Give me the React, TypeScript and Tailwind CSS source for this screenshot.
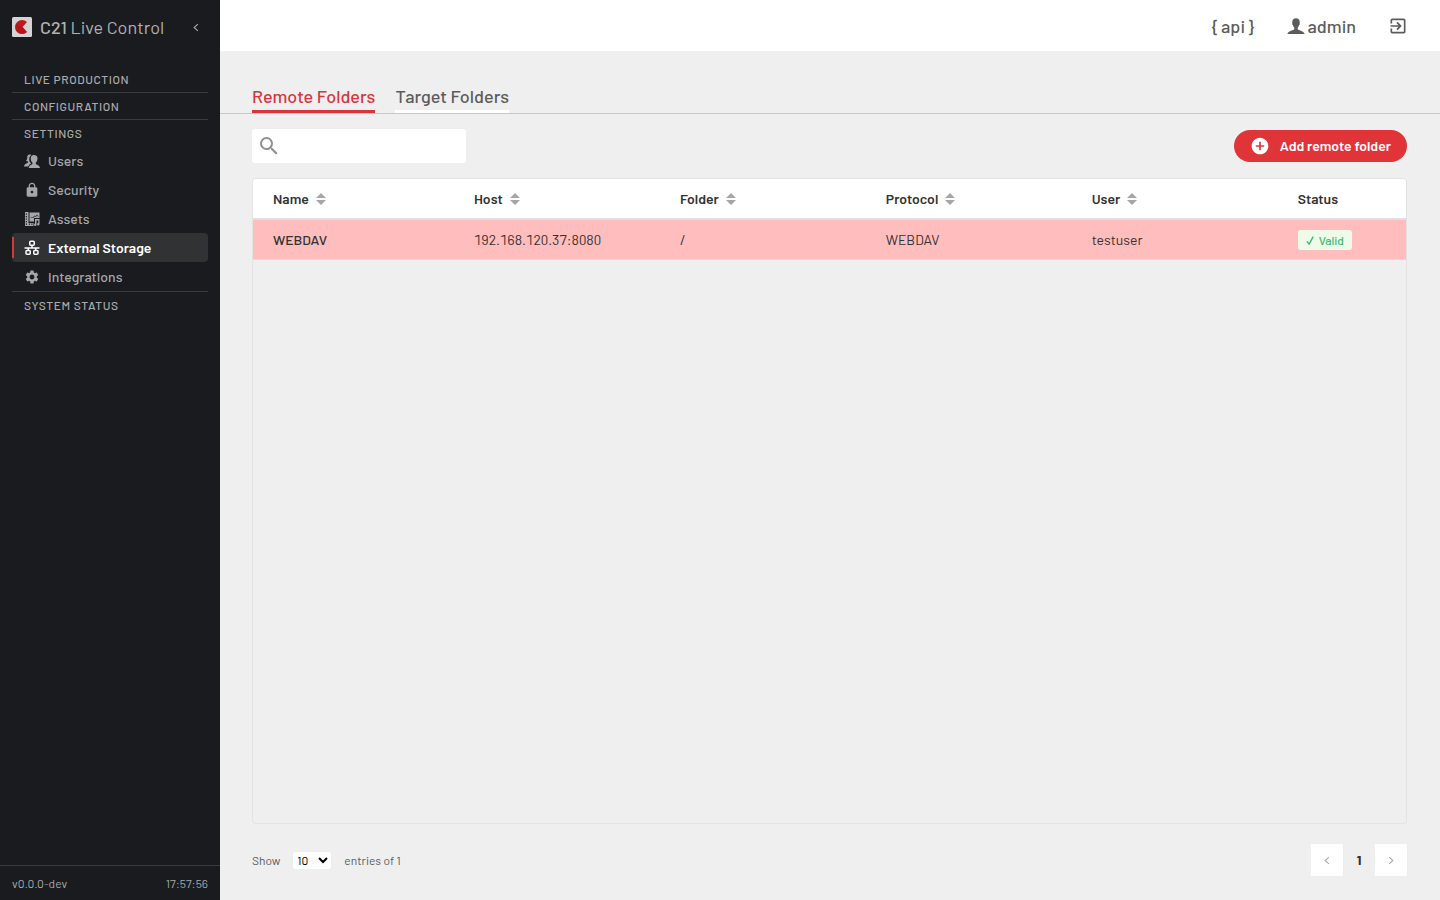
import React, { useState } from "react";
import { MdAddCircle, MdExitToApp, MdLock, MdSearch, MdSettings } from "react-icons/md";

const PERSON =
  "M12 1.5c-3 0-5 2.1-5 5.2 0 .5.1 1 .2 1.5-.6.3-.3 2.300.6 2.600.3 1.400 1 2.500 1.900 3.200v2.300C9.200 17.600 2 18 .500 22.500h23C22 18 14.800 17.600 14.300 16.300V14c.9-.7 1.600-1.800 1.900-3.200.9-.3 1.200-2.300.6-2.600.1-.5.2-1 .2-1.500 0-3.100-2-5.200-5-5.200z";

function PersonIcon({ className }: { className?: string }) {
  return (
    <svg viewBox="0 0 24 24" fill="currentColor" className={className} aria-hidden="true">
      <path d={PERSON} />
    </svg>
  );
}

function UsersIcon() {
  return (
    <svg viewBox="0 0 32 32" fill="currentColor" className="size-4" aria-hidden="true">
      <path d="M11.500 3C8 3 6.300 5.500 6.500 9c.1 2.800-.6 5-2.500 6.500 1.300 1 2.600 1.200 4 1.200v2C7.500 21 1 21 0 27h8.500c1-3.500 4-4.700 6-5.500-3-3-4.500-6-4-10.500.3-3.500 2-5.500 4.500-7C14 3.300 12.900 3 11.500 3z" />
      <path d="M20 4c-4.300 0-6.700 2.800-6.500 7 0 4 1.500 6.800 3.500 8.500v2C16.500 23.500 10.500 23.500 9.500 30H32c-1-6.500-8-6.500-8.500-8.500v-2c2-1.700 3.300-4.500 3.500-8.500.2-4.200-2.700-7-7-7z" />
    </svg>
  );
}

function AssetsIcon() {
  return (
    <svg viewBox="0 0 32 32" className="size-4" aria-hidden="true">
      <path
        fill="currentColor"
        fillRule="evenodd"
        d="M2 2h7v22h10v6H2V2zm1.500 3v2.500H6V5H3.500zm0 5v2.500H6V10H3.500zm0 5v2.500H6V15H3.500zm0 5v2.500H6V20H3.500zm0 5v2.500H6V25H3.500zm6 0v2.500H12V25H9.500zm5 0v2.500H17V25h-2.500z"
      />
      <path
        fill="currentColor"
        fillRule="evenodd"
        d="M11 3h20v11H20v7h-9V3zm2 11h5.500l3-3.500 2 1.500 2.500-3 3 3V11l-3-4-3 3.500-2-1.500-3.500 4H13v1zM22 16h9v10.500a2.500 2.500 0 1 1-2.500-2.500V19H25v8.500a2.500 2.500 0 1 1-3-2.400V16z"
      />
    </svg>
  );
}

function StorageIcon() {
  return (
    <svg viewBox="0 0 16 16" fill="none" stroke="currentColor" strokeWidth="1.500" className="size-4" aria-hidden="true">
      <rect x="5.750" y="1.250" width="4.500" height="4" rx="1" />
      <rect x="2" y="10.500" width="4.250" height="3.750" rx="1" />
      <rect x="9.750" y="10.500" width="4.250" height="3.750" rx="1" />
      <path d="M8 5.500V8M.5 8h15M4.250 8v2.500M11.750 8v2.500" />
    </svg>
  );
}

function LogoIcon() {
  return (
    <svg viewBox="0 0 20 20" className="size-5" aria-hidden="true">
      <rect width="20" height="20" rx="1.500" fill="#d4d4d6" />
      <path d="M10.500 10 15 5A7 7 0 1 0 15 15z" fill="#c4161f" />
      <path d="M10.500 10 4 6.500A7 7 0 0 0 15 15z" fill="#a80f18" opacity=".5" />
    </svg>
  );
}

function Chevron({ right, className }: { right?: boolean; className?: string }) {
  return (
    <svg viewBox="0 0 8 12" fill="none" stroke="currentColor" strokeWidth="1.500" className={className} aria-hidden="true">
      <path d={right ? "M1.500 1.500 6.500 6l-5 4.500" : "M6.500 1.500 1.500 6l5 4.500"} />
    </svg>
  );
}

const settings = [
  { label: "Users", icon: <UsersIcon /> },
  { label: "Security", icon: <MdLock className="size-4" /> },
  { label: "Assets", icon: <AssetsIcon /> },
  { label: "External Storage", icon: <StorageIcon />, active: true },
  { label: "Integrations", icon: <MdSettings className="size-4" /> },
];

const columns = [
  { label: "Name", width: "w-[17.43%]", sortable: true },
  { label: "Host", width: "w-[17.86%]", sortable: true },
  { label: "Folder", width: "w-[17.86%]", sortable: true },
  { label: "Protocol", width: "w-[17.86%]", sortable: true },
  { label: "User", width: "w-[17.86%]", sortable: true },
  { label: "Status", width: "w-[11.13%]", sortable: false },
];

function SectionButton({ children }: { children: React.ReactNode }) {
  return (
    <button type="button" className="flex h-[26px] w-full items-center px-3 text-left text-xs font-medium tracking-wider text-[#a9aaac]">
      {children}
    </button>
  );
}

function Sidebar() {
  return (
    <aside className="flex w-[220px] shrink-0 flex-col bg-[#1a1b1e] text-[#a6a7a9]">
      <div className="flex h-[54px] items-center px-3">
        <LogoIcon />
        <span className="ml-2 text-lg leading-[26px] text-[#b0b1b3]">
          <span className="font-medium">C21</span> Live Control
        </span>
        <button type="button" aria-label="Collapse menu" className="ml-auto flex size-6 items-center justify-center">
          <Chevron className="h-[9px] w-[6px]" />
        </button>
      </div>
      <nav className="mt-3 flex-1 px-3">
        <div className="border-b border-[#3a3b3e]">
          <SectionButton>LIVE PRODUCTION</SectionButton>
        </div>
        <div className="border-b border-[#3a3b3e]">
          <SectionButton>CONFIGURATION</SectionButton>
        </div>
        <div className="border-b border-[#3a3b3e]">
          <SectionButton>SETTINGS</SectionButton>
          <ul>
            {settings.map((item) => (
              <li key={item.label}>
                <a
                  href="#"
                  aria-current={item.active ? "page" : undefined}
                  className={
                    item.active
                      ? "relative flex h-[29px] items-center gap-2 rounded bg-[#313234] px-3 text-sm font-semibold text-white"
                      : "flex h-[29px] items-center gap-2 px-3 text-sm font-medium"
                  }
                >
                  {item.active && <span className="absolute inset-y-1 left-0 w-[2px] bg-[#d8363c]" />}
                  {item.icon}
                  {item.label}
                </a>
              </li>
            ))}
          </ul>
        </div>
        <SectionButton>SYSTEM STATUS</SectionButton>
      </nav>
      <div className="flex h-[35px] items-center justify-between border-t border-[#3a3b3e] px-3 text-xs">
        <span>v0.0.0-dev</span>
        <span>17:57:56</span>
      </div>
    </aside>
  );
}

export default function App() {
  const [query, setQuery] = useState("");
  return (
    <div className="flex min-h-screen bg-[#efefef] font-['Barlow','Roboto',sans-serif] text-[#333333]">
      <Sidebar />
      <div className="flex min-w-0 flex-1 flex-col">
        <header className="flex h-[51px] items-center justify-end gap-8 bg-white pr-8 text-lg leading-[26px] font-medium text-[#5c5c5c]">
          <a href="#">{"{ api }"}</a>
          <a href="#" className="flex items-center gap-[3px]">
            <PersonIcon className="size-[18px]" />
            admin
          </a>
          <button type="button" aria-label="Log out" className="flex">
            <MdExitToApp className="size-5" />
          </button>
        </header>

        <main className="flex flex-1 flex-col">
          <div className="flex gap-5 border-b border-[#c8c8c8] px-8 pt-8 text-lg leading-[27px] font-medium">
            <a href="#" aria-current="page" className="border-b-3 border-[#d8363c] text-[#d8363c]">
              Remote Folders
            </a>
            <a href="#" className="border-b-3 border-white text-[#5c5c5c]">
              Target Folders
            </a>
          </div>

          <div className="flex flex-1 flex-col pr-[33px] pl-8">
            <div className="mt-[15px] flex items-center justify-between">
              <label className="flex h-[34px] w-[214px] items-center rounded-[3px] bg-white pl-[5px]">
                <MdSearch className="size-6 text-[#8f8f8f]" />
                <input
                  type="search"
                  aria-label="Search"
                  value={query}
                  onChange={(e) => setQuery(e.target.value)}
                  className="min-w-0 flex-1 bg-transparent px-2 text-sm outline-none"
                />
              </label>
              <button type="button" className="flex h-8 items-center gap-[10px] rounded-full bg-[#e03439] px-4 text-sm font-semibold text-white">
                <MdAddCircle className="size-5" />
                Add remote folder
              </button>
            </div>

            <div className="mt-[15px] flex-1 overflow-hidden rounded border border-[#e3e3e3]">
              <table className="w-full table-fixed border-separate border-spacing-0 text-left text-sm">
                <thead>
                  <tr className="h-[41px] bg-white">
                    {columns.map((c) => (
                      <th key={c.label} scope="col" className={`${c.width} border-b-2 border-[#e3dfe0] pl-5 font-semibold`}>
                        {c.sortable ? (
                          <button type="button" className="flex items-center gap-[7px]">
                            {c.label}
                            <svg viewBox="0 0 10 12" fill="#a6a6a6" className="h-3 w-[10px]" aria-hidden="true">
                              <path d="M5 0l5 5H0zM5 12l5-5H0z" />
                            </svg>
                          </button>
                        ) : (
                          c.label
                        )}
                      </th>
                    ))}
                  </tr>
                </thead>
                <tbody className="tabular-nums">
                  <tr className="h-10 bg-[#ffbdbd] *:border-b *:border-[#e6d8d8] *:pl-5">
                    <td className="font-medium">WEBDAV</td>
                    <td>192.168.120.37:8080</td>
                    <td>/</td>
                    <td>WEBDAV</td>
                    <td>testuser</td>
                    <td>
                      <span className="inline-flex h-5 items-center gap-1 rounded-[3px] bg-[#effbe9] px-2 align-middle text-xs font-medium text-[#3fba74]">
                        <svg viewBox="0 0 10 10" fill="none" stroke="currentColor" strokeWidth="1.600" className="size-[9px]" aria-hidden="true">
                          <path d="M1 6l2.500 3L8 .8" />
                        </svg>
                        Valid
                      </span>
                    </td>
                  </tr>
                </tbody>
              </table>
            </div>

            <footer className="mt-5 mb-6 flex h-8 items-center text-xs text-[#5c5c5c]">
              <label htmlFor="page-size">Show</label>
              <select id="page-size" defaultValue="10" className="mx-[13px] h-[17px] w-[38px] rounded-[3px] bg-white text-xs text-black">
                <option>10</option>
                <option>25</option>
                <option>50</option>
              </select>
              <span>entries of 1</span>
              <div className="ml-auto flex items-center">
                <button type="button" aria-label="Previous page" className="flex size-8 items-center justify-center bg-white text-[#aaaaaa]">
                  <Chevron className="h-[9px] w-[6px]" />
                </button>
                <span className="w-8 text-center text-sm font-bold text-[#333333]">1</span>
                <button type="button" aria-label="Next page" className="flex size-8 items-center justify-center bg-white text-[#aaaaaa]">
                  <Chevron right className="h-[9px] w-[6px]" />
                </button>
              </div>
            </footer>
          </div>
        </main>
      </div>
    </div>
  );
}
